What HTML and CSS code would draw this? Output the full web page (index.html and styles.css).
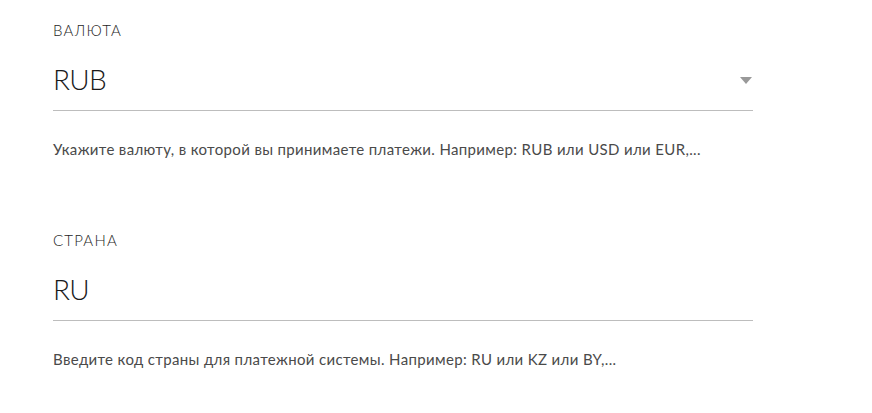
FILE: index.html
```html
<!DOCTYPE html>
<html lang="ru">
<head>
<meta charset="utf-8">
<title>Настройки платежа</title>
<link rel="stylesheet" href="styles.css">
</head>
<body>
<main class="form">
  <section class="field">
    <div class="label">Валюта</div>
    <div class="control">
      <span class="value">RUB</span>
      <svg class="caret" width="12" height="7" viewBox="0 0 12 7"><path d="M0 0H12L6 7Z" fill="#999"/></svg>
    </div>
    <p class="helper">Укажите валюту, в которой вы принимаете платежи. Например: RUB или USD или EUR,...</p>
  </section>
  <section class="field">
    <div class="label">Страна</div>
    <div class="control">
      <span class="value">RU</span>
    </div>
    <p class="helper">Введите код страны для платежной системы. Например: RU или KZ или BY,...</p>
  </section>
</main>
</body>
</html>
```
FILE: styles.css
```css
html, body {
  margin: 0;
  padding: 0;
  background: #fff;
}
body {
  font-family: "Lato", "Open Sans", sans-serif;
  color: #222;
}
.form {
  width: 700px;
  padding: 20px 0 0 53px;
}
.field + .field {
  margin-top: 71px;
}
.label {
  font-size: 15px;
  line-height: 20px;
  font-weight: 300;
  text-transform: uppercase;
  letter-spacing: 1.2px;
  color: #1e1e1e;
}
.control {
  display: flex;
  justify-content: space-between;
  align-items: center;
  margin-top: 21px;
  height: 36px;
  padding-bottom: 13px;
  border-bottom: 1px solid #bdbdbd;
}
.value {
  font-size: 28px;
  line-height: 36px;
  font-weight: 300;
  letter-spacing: -0.6px;
  color: #1a1a1a;
}
.caret {
  display: block;
  margin-right: 1px;
  margin-top: 2px;
}
.helper {
  margin: 28px 0 0;
  font-size: 15px;
  line-height: 20px;
  font-weight: 400;
  letter-spacing: 0.35px;
  color: #4a4a4a;
}
```
